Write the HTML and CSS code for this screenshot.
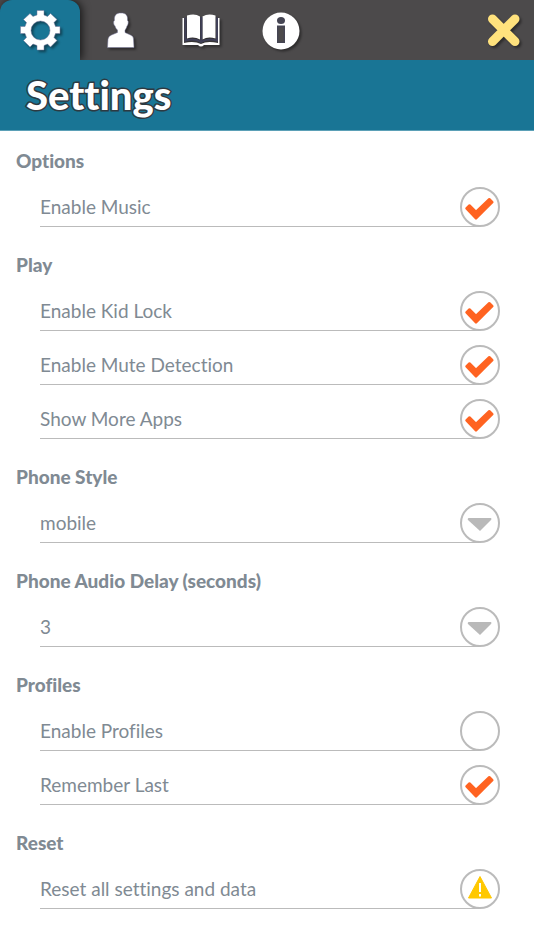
FILE: index.html
```
<!DOCTYPE html>
<html lang="en">
<head>
  <meta charset="utf-8">
  <meta name="viewport" content="width=device-width, initial-scale=1">
  <title>Settings</title>
  <link rel="stylesheet" href="styles.css">
</head>
<body>
  <!-- Shared icons for the rows -->
  <svg class="sprite" aria-hidden="true">
    <symbol id="check" viewBox="0 0 40 40">
      <path d="M6.500 21.500L9.500 18.500L16 24.800L29.300 12.200L32.300 15.200L16 31.300Z" fill="#ff6321" stroke="#ff6321" stroke-width="2.500" stroke-linejoin="round"/>
    </symbol>
    <symbol id="arrow" viewBox="0 0 40 40">
      <path d="M8.500 15H31Q32 16 31 17L20 28L8 17Q7 16 8.500 15Z" fill="#b9b9b9"/>
    </symbol>
  </svg>

  <header>
    <nav class="tabs">
      <button class="tab active" type="button" aria-label="Settings">
        <svg class="icon" viewBox="0 0 40 40">
          <path fill="#fff" stroke="#77779a" stroke-width="0.500" fill-rule="evenodd" d="M17 0.500H24V5L27.500 6.400L30.500 3.500L37 9.500L34 12.500L35.500 16.500H40V23.500H35.500L34 27.500L37 30.500L30.500 37L27.500 34L24 35.500V40H17V35.500L13 34L10 37L3.500 30.500L6.500 27.500L5 23.500H0.500V16.500H5L6.500 12.500L3.500 9.500L10 3.500L13 6.400L17 5ZM20.500 11A9.500 9.500 0 1 0 20.500 30A9.500 9.500 0 1 0 20.500 11Z"/>
        </svg>
      </button>
      <button class="tab" type="button" aria-label="Profile">
        <svg class="icon" viewBox="0 0 40 40">
          <path fill="#fff" stroke="#77779a" stroke-width="0.500" d="M21 3C26 3 28 5.500 27.500 10.500C29 11 28 15.500 27 16C26.500 18 25.500 19.500 25 20V22.500L30.500 25Q33.500 26 33.500 29L34 37.500H7.500L8 29Q8.500 26 11.500 25L17.500 22.500V20C16.500 19 15.500 18 15 16C13.500 15 13 11 14.500 10.500C14 5.500 16 3 21 3Z"/>
        </svg>
      </button>
      <button class="tab" type="button" aria-label="Guide">
        <svg class="icon" viewBox="0 0 40 40">
          <path fill="#fff" d="M2.500 8H4V33Q14 30.500 21 34Q27 30.500 38 33V8H39.500V35H24Q21 38 18 35H2.500Z"/>
          <path fill="#fff" d="M7 5.500Q15 3 20 6.500V29.500Q14 26 7 28.500ZM22.500 6.500Q28 3 35.500 5.500V28.500Q28 26 22.500 29.500Z"/>
          <path fill="none" stroke="#404058" stroke-width="2" d="M5.500 7.500V30.500Q15 28 21 32Q28 28 37 30.500V7.500M21.300 7V31"/>
        </svg>
      </button>
      <button class="tab" type="button" aria-label="Information">
        <svg class="icon" viewBox="0 0 40 40">
          <circle cx="21" cy="21" r="18.500" fill="#fff"/>
          <ellipse cx="21" cy="10.500" rx="4" ry="3.500" fill="#454553"/>
          <path fill="#454553" d="M17 15.500H25V33H17Z"/>
          <path fill="#4c4a4b" d="M18.500 17.500H23.500V31.500H18.500Z"/>
        </svg>
      </button>
      <button class="close" type="button" aria-label="Close">
        <svg class="icon" viewBox="0 0 40 40">
          <path d="M8.500 9L31 31.500M31 9L8.500 31.500" stroke="#ffe27d" stroke-width="9" stroke-linecap="round"/>
        </svg>
      </button>
    </nav>
    <h1>Settings</h1>
  </header>

  <main>
    <section>
      <h2>Options</h2>
      <label class="row">
        <span class="text">Enable Music</span>
        <span class="mark"><input type="checkbox" checked><svg><use href="#check"/></svg></span>
      </label>
    </section>

    <section>
      <h2>Play</h2>
      <label class="row">
        <span class="text">Enable Kid Lock</span>
        <span class="mark"><input type="checkbox" checked><svg><use href="#check"/></svg></span>
      </label>
      <label class="row">
        <span class="text">Enable Mute Detection</span>
        <span class="mark"><input type="checkbox" checked><svg><use href="#check"/></svg></span>
      </label>
      <label class="row">
        <span class="text">Show More Apps</span>
        <span class="mark"><input type="checkbox" checked><svg><use href="#check"/></svg></span>
      </label>
    </section>

    <section>
      <h2><label for="phoneStyle">Phone Style</label></h2>
      <div class="row">
        <select id="phoneStyle"><option>mobile</option></select>
        <span class="mark ring"><svg><use href="#arrow"/></svg></span>
      </div>
    </section>

    <section>
      <h2><label for="audioDelay">Phone Audio Delay (seconds)</label></h2>
      <div class="row">
        <select id="audioDelay"><option>3</option></select>
        <span class="mark ring"><svg><use href="#arrow"/></svg></span>
      </div>
    </section>

    <section>
      <h2>Profiles</h2>
      <label class="row">
        <span class="text">Enable Profiles</span>
        <span class="mark"><input type="checkbox"><svg><use href="#check"/></svg></span>
      </label>
      <label class="row">
        <span class="text">Remember Last</span>
        <span class="mark"><input type="checkbox" checked><svg><use href="#check"/></svg></span>
      </label>
    </section>

    <section>
      <h2>Reset</h2>
      <button class="row" type="button">
        <span class="text">Reset all settings and data</span>
        <span class="mark ring">
          <svg viewBox="0 0 40 40">
            <path d="M20 7.500L31.500 29H8.500Z" fill="#ffc800" stroke="#ffc800" stroke-linejoin="round"/>
            <path d="M20 14V23M20 25V27.500" stroke="#fff" stroke-width="2"/>
          </svg>
        </span>
      </button>
    </section>
  </main>
</body>
</html>
```
FILE: styles.css
```
* {
  box-sizing: border-box;
}

body {
  margin: 0;
  background: #fff;
  color: #808a93;
  font-family: Lato, "Open Sans", sans-serif;
  font-size: 19px;
  font-variant-ligatures: none;
}

button,
select {
  padding: 0;
  border: 0;
  background: none;
  color: inherit;
  font: inherit;
  font-variant-ligatures: none;
  cursor: pointer;
}

.sprite {
  display: none;
}

/* Tab bar */
.tabs {
  display: flex;
  height: 60px;
  background: #4c4a4b;
}

.tab {
  display: grid;
  place-items: center;
  width: 80px;
}

.tab.active {
  background: #197595;
  border-radius: 12px 12px 0 0;
  box-shadow: 2px 0 8px rgba(0, 0, 0, 0.7);
  clip-path: inset(0 -12px 0 0);
}

.close {
  display: grid;
  place-items: center;
  width: 60px;
  margin-left: auto;
}

.icon {
  width: 40px;
  height: 40px;
  overflow: visible;
  filter: drop-shadow(2px 2px 1px rgba(0, 0, 0, 0.4));
}

h1 {
  margin: 0;
  padding: 0 26px;
  height: 71px;
  border-bottom: 1px solid #5ba0b7;
  background: #197595;
  color: #fff;
  font-size: 40px;
  font-weight: 900;
  line-height: 70px;
  -webkit-text-stroke: 3px #2d3a42;
  paint-order: stroke fill;
}

/* Settings list */
main {
  padding: 6px 34px 0 16px;
}

h2 {
  margin: 0;
  padding-bottom: 2px;
  font-size: 19px;
  font-weight: 900;
  line-height: 48px;
}

.row {
  display: flex;
  align-items: center;
  justify-content: space-between;
  width: calc(100% - 24px);
  height: 40px;
  margin: 0 0 14px 24px;
  background: linear-gradient(#bbb, #bbb) left bottom / calc(100% - 20px) 1px no-repeat;
  text-align: left;
}

.text {
  padding-bottom: 2px;
}

.row select {
  flex: 1;
  height: 40px;
  margin-right: -40px;
  padding: 0 40px 2px 0;
  appearance: none;
}

.mark {
  display: grid;
  flex: none;
  width: 40px;
  height: 40px;
  pointer-events: none;
}

.mark input,
.mark svg {
  grid-area: 1 / 1;
  width: 40px;
  height: 40px;
  margin: 0;
}

.mark input,
.ring {
  appearance: none;
  border: 2px solid #bbb;
  border-radius: 50%;
  background: #fff;
}

.mark.ring svg {
  margin: -2px;
}

.mark input:not(:checked) + svg {
  visibility: hidden;
}
```
